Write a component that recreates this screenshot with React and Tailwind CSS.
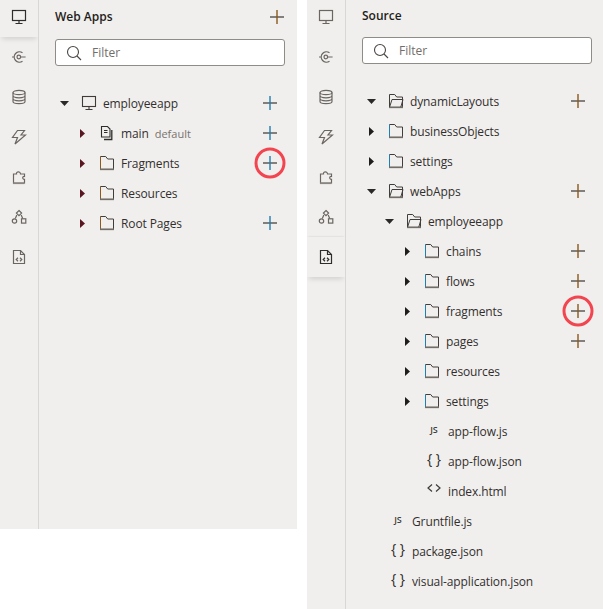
const railIcons = {
  monitor: (
    <>
      <rect x="1.5" y="1.5" width="13" height="10" />
      <path d="M8 11.5v2.500M4.500 14.500h7" />
    </>
  ),
  api: (
    <>
      <path d="M11.500 3.800A5.200 5.200 0 1 0 11.500 12.200" />
      <circle cx="7.800" cy="8" r="1.800" />
      <path d="M1 8h2.500M9.600 8h5" />
    </>
  ),
  data: (
    <>
      <ellipse cx="8" cy="3.500" rx="6" ry="2.200" />
      <path d="M2 3.500v9c0 1.200 2.700 2.200 6 2.200s6-1 6-2.200v-9M2 6.600c0 1.200 2.700 2.200 6 2.200s6-1 6-2.200M2 9.600c0 1.200 2.700 2.200 6 2.200s6-1 6-2.200" />
    </>
  ),
  bolt: <path d="M6.500 1.500h7L10 6h4.500L4 15l2.500-6.500H1.500z" />,
  puzzle: (
    <>
      <path d="M2.500 14V5h3c-.5-2.800 4-3 4 0h4v2.500c-2.400-.4-2.400 3 0 2.800V14z" />
      <path d="M2 14.300h11.500" strokeWidth="1.600" stroke="#8a8682" />
    </>
  ),
  shapes: (
    <>
      <path d="M8 1.500l2.600 2.600L8 6.700 5.400 4.100z" />
      <circle cx="3.500" cy="12" r="2.200" />
      <rect x="10.500" y="9.800" width="4.300" height="4.300" />
      <path d="M5.800 6l-1.500 3.600M10.200 6l1.500 3.600" />
    </>
  ),
  source: (
    <>
      <path d="M2.500 1.500h7l4 4v9h-11z" />
      <path d="M9.500 1.500v4h4M7 8.800L5.200 10.500 7 12.200M9 8.800l1.800 1.700L9 12.200" />
    </>
  ),
}

const railOrder = ['monitor', 'api', 'data', 'bolt', 'puzzle', 'shapes', 'source']

function Rail({ active }) {
  return (
    <div className="w-[39px] shrink-0 border-r border-[#d9d7d5] h-full overflow-hidden">
      <div className="-mt-[3px]">
        {railOrder.map((name, i) => (
          <div
            key={name}
            className={`h-10 flex items-center justify-center ${
              i === active
                ? 'text-[#2f2d2b] shadow-[0_4px_5px_-2px_rgba(0,0,0,0.13),0_-1px_2px_-1px_rgba(0,0,0,0.15)]'
                : 'text-[#6a6662]'
            }`}
          >
            <svg width="16" height="16" viewBox="0 0 16 16" fill="none" stroke="currentColor" strokeWidth="1.200">
              {railIcons[name]}
            </svg>
          </div>
        ))}
      </div>
    </div>
  )
}

function Plus({ tint, ring }) {
  return (
    <span className="relative block w-4 h-4 shrink-0">
      <svg width="16" height="16" viewBox="0 0 16 16">
        <rect x="1" y="7.300" width="14" height="1.400" fill="#55514e" />
        <rect x="7.300" y="1" width="1.400" height="14" fill={tint} />
      </svg>
      {ring && (
        <span className="absolute left-1/2 top-1/2 -translate-x-1/2 -translate-y-1/2 w-[31px] h-[31px] rounded-full border-[3px] border-[#f2454f]" />
      )}
    </span>
  )
}

function Caret({ open, color }) {
  return (
    <span className="w-[10px] flex justify-center shrink-0">
      {open ? (
        <svg width="9" height="5" viewBox="0 0 9 5"><path d="M0 0h9L4.500 5z" fill="#2b2927" /></svg>
      ) : (
        <svg width="5" height="9" viewBox="0 0 5 9"><path d="M0 0l5 4.500L0 9z" fill={color} /></svg>
      )}
    </span>
  )
}

function Folder({ open, edge = '#403d3a' }) {
  return (
    <svg width="16" height="16" viewBox="0 0 16 16" fill="none">
      <path d="M1.500 14V1.500" stroke={edge} strokeWidth="1" />
      <path d="M1.500 1.500h5.200l2 2.500h5.800V14" stroke="#403d3a" strokeWidth="1" />
      <path d="M1 14.300h14" stroke="#716d69" strokeWidth="1.700" />
      {open && <path d="M1.600 14L4 6.500h11L12.800 14" stroke="#403d3a" strokeWidth="1" />}
    </svg>
  )
}

function Monitor() {
  return (
    <svg width="16" height="16" viewBox="0 0 16 16" fill="none" stroke="#3f3b38" strokeWidth="1.100">
      <rect x="1.500" y="1.500" width="13" height="10" />
      <path d="M8 11.500v2.500M4.500 14.500h7" />
    </svg>
  )
}

function PageStack() {
  return (
    <svg width="16" height="16" viewBox="0 0 16 16" fill="none" stroke="#2f2d2b" strokeWidth="1.100">
      <path d="M2.500 1.500h6l2.500 2.500v8h-8.500z" />
      <path d="M5 5.500h3.500M5 7.500h3.500" />
      <path d="M12.800 5v9.500H5" strokeWidth="1.300" />
    </svg>
  )
}

function JsGlyph() {
  return <span className="block w-4 text-center text-[9px] font-semibold leading-none text-[#3f3c39] -mt-[4px]">JS</span>
}

function BraceGlyph() {
  return <span className="block w-4 text-center text-[14px] leading-none text-[#2e2c2a] -mt-[5px] whitespace-nowrap">{'{ }'}</span>
}

function CodeGlyph() {
  return (
    <svg width="16" height="16" viewBox="0 0 16 16" fill="none" stroke="#3d3a37" strokeWidth="1.200" className="-mt-[4px]">
      <path d="M6 3.500L2 7l4 3.500M10 3.500L14 7l-4 3.500" />
    </svg>
  )
}

function Row({ indent, caret, caretColor = '#1f1d1b', icon, label, note, plus, tint, ring }) {
  return (
    <div className={`h-[30px] flex items-center ${indent}`}>
      {caret ? <Caret open={caret === 'open'} color={caretColor} /> : <span className="w-[10px] shrink-0" />}
      <span className="w-4 flex justify-center shrink-0 ml-3">{icon}</span>
      <span className="ml-[6px] mt-[2px] text-[#312f2d] tracking-[-0.12px]">{label}</span>
      {note && <span className="ml-[6px] mt-[2px] text-[11px] text-[#77736f]">{note}</span>}
      <span className="flex-1" />
      {plus && <Plus tint={tint} ring={ring} />}
    </div>
  )
}

function Panel({ title, active, rows, heightClass, headerClass, treeClass, widthClass }) {
  return (
    <div className={`flex bg-[#f1efed] shrink-0 ${heightClass} ${widthClass}`}>
      <Rail active={active} />
      <div className="ml-4 w-[230px]">
        <div className={`flex items-center justify-between ${headerClass}`}>
          <span className="text-[12px] font-semibold text-[#1f1d1b]">{title}</span>
          {title === 'Web Apps' && <Plus tint="#8a5a1c" />}
        </div>
        <div className="mt-[5px] h-[27px] flex items-center bg-white border border-[#8f8c88] rounded-[3px]">
          <svg width="16" height="16" viewBox="0 0 16 16" fill="none" stroke="#4a4643" strokeWidth="1.100" className="ml-[10px] shrink-0">
            <circle cx="7" cy="7" r="5.500" />
            <path d="M11 11l4 4" />
          </svg>
          <input
            readOnly
            placeholder="Filter"
            className="ml-[10px] w-full min-w-0 bg-transparent outline-none text-[12px] placeholder:text-[#716d69]"
          />
        </div>
        <div className={`mt-[22px] ${treeClass}`}>{rows}</div>
      </div>
    </div>
  )
}

const blue = '#1f7fb0'
const brown = '#8a5a1c'
const maroon = '#5a1620'

export default function App() {
  const webApps = (
    <>
      <Row indent="pl-1" caret="open" icon={<Monitor />} label="employeeapp" plus tint={blue} />
      <Row indent="pl-[22px]" caret="closed" caretColor={maroon} icon={<PageStack />} label="main" note="default" plus tint={blue} />
      <Row indent="pl-[22px]" caret="closed" caretColor={maroon} icon={<Folder edge={brown} />} label="Fragments" plus tint={blue} ring />
      <Row indent="pl-[22px]" caret="closed" caretColor={maroon} icon={<Folder edge={brown} />} label="Resources" />
      <Row indent="pl-[22px]" caret="closed" caretColor={maroon} icon={<Folder edge={brown} />} label="Root Pages" plus tint={blue} />
    </>
  )

  const source = (
    <>
      <Row indent="pl-1" caret="open" icon={<Folder open />} label="dynamicLayouts" plus tint={brown} />
      <Row indent="pl-1" caret="closed" icon={<Folder edge={blue} />} label="businessObjects" />
      <Row indent="pl-1" caret="closed" icon={<Folder edge={blue} />} label="settings" />
      <Row indent="pl-1" caret="open" icon={<Folder open />} label="webApps" plus tint={brown} />
      <Row indent="pl-[22px]" caret="open" icon={<Folder open />} label="employeeapp" />
      <Row indent="pl-10" caret="closed" icon={<Folder edge={blue} />} label="chains" plus tint={brown} />
      <Row indent="pl-10" caret="closed" icon={<Folder edge={blue} />} label="flows" plus tint={brown} />
      <Row indent="pl-10" caret="closed" icon={<Folder edge={blue} />} label="fragments" plus tint={brown} ring />
      <Row indent="pl-10" caret="closed" icon={<Folder edge={blue} />} label="pages" plus tint={brown} />
      <Row indent="pl-10" caret="closed" icon={<Folder edge={blue} />} label="resources" />
      <Row indent="pl-10" caret="closed" icon={<Folder edge={blue} />} label="settings" />
      <Row indent="pl-[42px]" icon={<JsGlyph />} label="app-flow.js" />
      <Row indent="pl-[42px]" icon={<BraceGlyph />} label="app-flow.json" />
      <Row indent="pl-[42px]" icon={<CodeGlyph />} label="index.html" />
      <Row indent="pl-[6px]" icon={<JsGlyph />} label="Gruntfile.js" />
      <Row indent="pl-[6px]" icon={<BraceGlyph />} label="package.json" />
      <Row indent="pl-[6px]" icon={<BraceGlyph />} label="visual-application.json" />
    </>
  )

  return (
    <div className="flex items-start gap-[10px] w-[603px] h-[609px] bg-white overflow-hidden font-['Open_Sans',sans-serif] text-[12px]">
      <Panel
        title="Web Apps"
        active={0}
        rows={webApps}
        heightClass="h-[529px]"
        widthClass="w-[297px]"
        headerClass="h-[34px]"
        treeClass="pr-[7px]"
      />
      <Panel
        title="Source"
        active={6}
        rows={source}
        heightClass="h-[609px]"
        widthClass="w-[296px]"
        headerClass="h-8"
        treeClass="pr-[6px]"
      />
    </div>
  )
}
